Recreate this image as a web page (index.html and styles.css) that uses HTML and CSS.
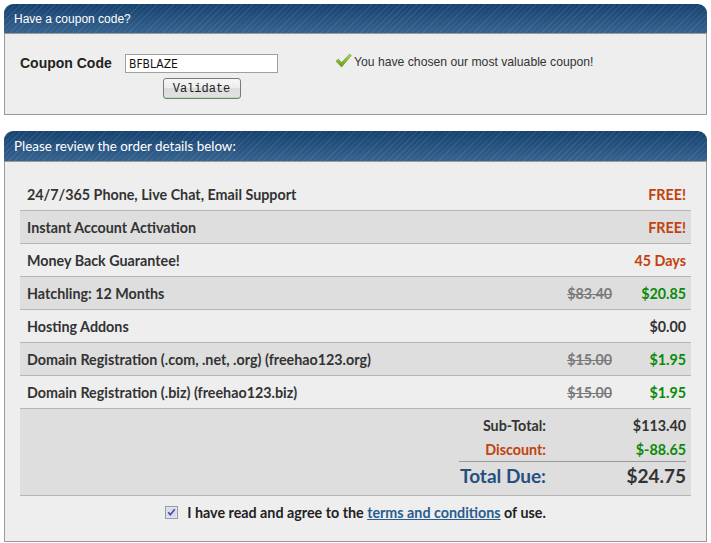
FILE: index.html
```html
<!DOCTYPE html>
<html>
<head>
<meta charset="utf-8">
<link rel="stylesheet" href="styles.css">
</head>
<body>
<div class="panel coupon">
  <div class="panel-head">Have a coupon code?</div>
  <div class="panel-body coupon-body">
    <div class="coupon-form">
      <label class="coupon-label" for="code">Coupon Code</label>
      <div class="coupon-field">
        <input id="code" class="coupon-input" type="text" value="BFBLAZE">
        <button class="btn" type="button">Validate</button>
      </div>
    </div>
    <div class="coupon-msg">
      <svg class="check" width="17" height="15" viewBox="0 0 17 15"><defs><linearGradient id="g" x1="0" y1="0" x2="0" y2="1"><stop offset="0" stop-color="#b6e05a"/><stop offset="1" stop-color="#5f9a12"/></linearGradient></defs><path d="M1 8.2 L3.4 6.2 L6.6 9.6 L14.8 1 L16.2 2.6 L6.6 14 Z" fill="url(#g)" stroke="#5c8c1c" stroke-width="0.6"/></svg>
      <span>You have chosen our most valuable coupon!</span>
    </div>
  </div>
</div>

<div class="panel order">
  <div class="panel-head head-b">Please review the order details below:</div>
  <div class="panel-body order-body">
    <div class="items">
      <div class="row"><span class="name">24/7/365 Phone, Live Chat, Email Support</span><span class="old"></span><span class="val red">FREE!</span></div>
      <div class="row alt"><span class="name">Instant Account Activation</span><span class="old"></span><span class="val red">FREE!</span></div>
      <div class="row"><span class="name">Money Back Guarantee!</span><span class="old"></span><span class="val red">45 Days</span></div>
      <div class="row alt"><span class="name">Hatchling: 12 Months</span><span class="old"><s>$83.40</s></span><span class="val green">$20.85</span></div>
      <div class="row"><span class="name">Hosting Addons</span><span class="old"></span><span class="val">$0.00</span></div>
      <div class="row alt"><span class="name">Domain Registration (.com, .net, .org) (freehao123.org)</span><span class="old"><s>$15.00</s></span><span class="val green">$1.95</span></div>
      <div class="row"><span class="name">Domain Registration (.biz) (freehao123.biz)</span><span class="old"><s>$15.00</s></span><span class="val green">$1.95</span></div>
      <div class="totals">
        <div class="tot-grid">
          <span class="tl">Sub-Total:</span><span class="tv">$113.40</span>
          <span class="tl red">Discount:</span><span class="tv green">$-88.65</span>
          <span class="tl big blue due">Total Due:</span><span class="tv big due">$24.75</span>
        </div>
      </div>
    </div>
    <div class="agree">
      <span class="cbox"><svg width="13" height="13" viewBox="0 0 13 13"><rect x="0.5" y="0.5" width="12" height="12" fill="#e8e8ee" stroke="#9a9aa8"/><rect x="1.5" y="1.5" width="10" height="10" fill="#dcdce6"/><path d="M3.2 6.3 L5.3 8.8 L9.8 3.2" fill="none" stroke="#3a4fb0" stroke-width="1.6"/></svg></span>
      <span>I have read and agree to the <a href="#" class="link">terms and conditions</a> of use.</span>
    </div>
  </div>
</div>
</body>
</html>
```

FILE: styles.css
```css
html, body { margin: 0; padding: 0; background: #fff; }
body { padding: 4px 4px 0 4px; font-family: "Lato", "Liberation Sans", sans-serif; color: #333; }

.panel { width: 703px; }
.coupon { margin-bottom: 16px; }

.panel-head {
  height: 29px;
  box-sizing: border-box;
  padding: 0 10px;
  display: flex;
  align-items: center;
  border-radius: 9px 9px 0 0;
  color: #fff;
  font-family: "Liberation Sans", sans-serif;
  font-size: 12px;
  background:
    repeating-linear-gradient(135deg, rgba(255,255,255,0.08) 0 1px, rgba(255,255,255,0) 1px 4px),
    linear-gradient(#16426f, #36628f);
}
.head-b { font-family: "Lato", sans-serif; font-size: 13.4px; height: 30px; }

.panel-body {
  background: #eeeeee;
  border: 1px solid #9a9a9a;
}

.coupon-body {
  height: 80px;
  box-sizing: content-box;
  display: flex;
  align-items: flex-start;
  padding: 0 15px;
}
.coupon-form { display: flex; align-items: flex-start; padding-top: 20px; }
.coupon-label {
  font-family: "Liberation Sans", sans-serif;
  font-weight: bold;
  font-size: 14px;
  color: #222;
  margin-top: 1px;
  width: 105px;
}
.coupon-field { display: flex; flex-direction: column; align-items: center; }
.coupon-input {
  width: 153px; height: 19px; box-sizing: border-box;
  border: 1px solid #a0a0a0;
  background: #fff;
  padding: 0 3px;
  font-family: "DejaVu Sans Condensed", "Liberation Sans", sans-serif;
  font-size: 12px;
  color: #111;
  margin: 0;
}
.btn {
  margin-top: 5px;
  width: 78px; height: 21px;
  box-sizing: border-box;
  border: 1px solid #7a7a7a;
  border-radius: 3px;
  background: linear-gradient(#f6f6f6 0, #ececec 45%, #dcdcdc 46%, #e2e2e2 100%);
  font-family: "Liberation Mono", monospace;
  font-size: 12px;
  color: #222;
  padding: 0;
  box-shadow: inset 0 -1px 0 #b8e0b8;
}
.coupon-msg {
  margin-left: 57px;
  padding-top: 21px;
  display: flex;
  align-items: center;
  font-family: "Liberation Sans", sans-serif;
  font-size: 12.2px;
  color: #333;
}
.check { margin-right: 2px; margin-top: -4px; }

.order-body { padding: 16px 15px 0 15px; }

.items { font-weight: 700; font-size: 14.3px; }
.row {
  display: flex;
  align-items: center;
  height: 32px;
  border-bottom: 1px solid #b5b5b5;
  padding: 0 5px 0 7px;
}
.row.alt { background: #dedede; }
.name { flex: 1; }
.old { width: 80px; text-align: right; color: #7a7a7a; font-weight: 700; }
.old s { text-decoration-thickness: 1px; }
.val { width: 74px; text-align: right; }
.red { color: #c2410c; }
.green { color: #0a8a0a; }
.blue { color: #264f7f; }

.totals {
  background: #dedede;
  border-bottom: 1px solid #b5b5b5;
  display: flex;
  justify-content: flex-end;
  padding: 4px 5px 5px 0;
}
.tot-grid {
  display: grid;
  grid-template-columns: 87px 140px;
  grid-template-rows: 24px 24px 29px;
  align-items: center;
}
.tl, .tv { text-align: right; }
.tl.due, .tv.due { border-top: 1px solid #999; height: 28px; line-height: 28px; align-self: stretch; }
.big { font-size: 19px; }

.agree {
  display: flex;
  justify-content: center;
  align-items: center;
  height: 20px;
  padding: 6px 0 19px 0;
  font-weight: 700;
  font-size: 14.3px;
  color: #222;
}
.cbox { display: inline-flex; margin-right: 9px; }
.link { color: #2a5d8f; text-decoration: underline; }
```
